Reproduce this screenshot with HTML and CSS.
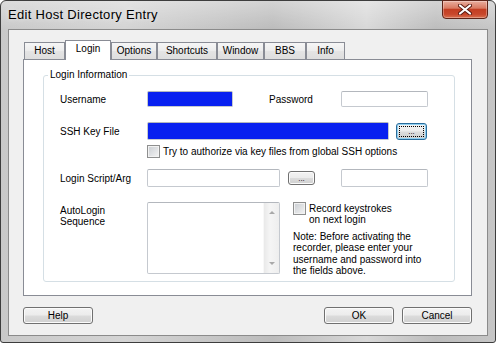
FILE: index.html
```html
<!DOCTYPE html>
<html lang="en">
<head>
    <meta charset="UTF-8">
    <title>Edit Host Directory Entry</title>
    <link rel="stylesheet" href="styles.css">
</head>
<body>
    <div class="window">
        <div class="titlebar">
            <span class="title">Edit Host Directory Entry</span>
            <div class="close">
                <svg width="14" height="11" viewBox="0 0 14 11">
                    <path d="M2 1.5 L12 9.5 M12 1.5 L2 9.5" stroke="#5a1a10" stroke-width="4" stroke-linecap="round"/>
                    <path d="M2 1.5 L12 9.5 M12 1.5 L2 9.5" stroke="#fff" stroke-width="2.2" stroke-linecap="round"/>
                </svg>
            </div>
        </div>

        <div class="client">
            <!-- tab strip -->
            <div class="tabs">
                <div class="tab t-host">Host</div>
                <div class="tab active t-login">Login</div>
                <div class="tab t-options">Options</div>
                <div class="tab t-shortcuts">Shortcuts</div>
                <div class="tab t-window">Window</div>
                <div class="tab t-bbs">BBS</div>
                <div class="tab t-info">Info</div>
            </div>

            <div class="panel">
                <div class="group">
                    <div class="group-title">Login Information</div>

                    <div class="row r-user">
                        <span class="label">Username</span>
                        <div class="field blue f-user"></div>
                        <span class="pw-label">Password</span>
                        <div class="field f-small"></div>
                    </div>

                    <div class="row r-key">
                        <span class="label">SSH Key File</span>
                        <div class="field blue f-key"></div>
                        <div class="btn browse focus"><span class="focus-rect">...</span></div>
                    </div>

                    <div class="row r-check">
                        <span class="check"></span>
                        <span class="check-text">Try to authorize via key files from global SSH options</span>
                    </div>

                    <div class="row r-script">
                        <span class="label">Login Script/Arg</span>
                        <div class="field f-script"></div>
                        <div class="btn browse small">...</div>
                        <div class="field f-small f-arg"></div>
                    </div>

                    <div class="row r-auto">
                        <span class="label two-line">AutoLogin<br>Sequence</span>
                        <div class="field memo">
                            <div class="memo-text"></div>
                            <div class="scroll">
                                <span class="arrow-up"></span>
                                <span class="arrow-down"></span>
                            </div>
                        </div>
                        <div class="record">
                            <div class="record-line">
                                <span class="check"></span>
                                <span class="record-text">Record keystrokes<br>on next login</span>
                            </div>
                            <p class="note">Note: Before activating the<br>recorder, please enter your<br>username and password into<br>the fields above.</p>
                        </div>
                    </div>
                </div>
            </div>

            <div class="buttons">
                <div class="btn">Help</div>
                <div class="spacer"></div>
                <div class="btn">OK</div>
                <div class="btn">Cancel</div>
            </div>
        </div>
    </div>
</body>
</html>
```

FILE: styles.css
```css
body {
    margin: 0;
    background: #fff;
    font-family: "Liberation Sans", Arial, sans-serif;
    font-size: 10px;
    color: #000;
}
.window {
    width: 496px;
    height: 343px;
    box-sizing: border-box;
    border: 1px solid #3d3d3d;
    border-radius: 6px 6px 3px 3px;
    padding: 0 7px 6px 7px;
    display: flex;
    flex-direction: column;
    background:
        linear-gradient(180deg, rgba(255,255,255,0.35), rgba(255,255,255,0) 28px),
        linear-gradient(90deg, #c9c9c9 0%, #d4d4d4 25%, #bcbcbc 55%, #d8d8d8 74%, #bdbdbd 88%, #c6c6c6 100%);
}
.titlebar {
    height: 28px;
    display: flex;
    justify-content: space-between;
    align-items: flex-start;
}
.title {
    font-size: 13px;
    line-height: 28px;
    letter-spacing: 0.3px;
    text-shadow: 0 0 5px rgba(255,255,255,0.7);
}
.close {
    width: 46px;
    height: 19px;
    margin-top: -1px;
    box-sizing: border-box;
    border: 1px solid #5e2418;
    border-radius: 0 0 4px 4px;
    background: linear-gradient(#e9ae9e, #d97a62 42%, #c33e22 50%, #c8472b 78%, #d9704f);
    display: flex;
    align-items: center;
    justify-content: center;
    box-shadow: inset 0 0 0 1px rgba(255,255,255,0.3);
}
.client {
    flex: 1;
    background: #f0f0f0;
    border: 1px solid #8b8b8b;
    padding: 10px 15px 11px 14px;
    display: flex;
    flex-direction: column;
}

/* tabs */
.tabs {
    display: flex;
    align-items: flex-end;
    height: 20px;
    margin-bottom: -1px;
    padding-left: 1px;
    position: relative;
    z-index: 1;
}
.tab {
    height: 17px;
    margin-bottom: 1px;
    box-sizing: border-box;
    border: 1px solid #898c95;
    border-bottom: none;
    background: linear-gradient(#f6f6f6, #ececec 50%, #e4e4e4 51%, #dedede);
    text-align: center;
    line-height: 15px;
}
.tab.active {
    height: 20px;
    margin-bottom: 0;
    background: #fff;
    line-height: 15px;
    padding-bottom: 3px;
}
.t-host { width: 41px; }
.t-login { width: 46px; }
.t-options { width: 46px; }
.t-shortcuts { width: 60px; }
.t-window { width: 47px; }
.t-bbs { width: 42px; }
.t-info { width: 39px; }

.panel {
    height: 237px;
    box-sizing: border-box;
    border: 1px solid #898c95;
    background: #fff;
    padding: 15px 16px 13px 19px;
}
.group {
    height: 207px;
    box-sizing: border-box;
    border: 1px solid #d5dfe5;
    border-radius: 3px;
    padding-left: 16px;
}
.group-title {
    width: max-content;
    height: 12px;
    margin: -7px 0 0 -12px;
    padding: 0 2px;
    line-height: 12px;
    background: #fff;
}

.row {
    display: flex;
    align-items: center;
}
.label {
    width: 87px;
    flex-shrink: 0;
}
.field {
    height: 16px;
    box-sizing: border-box;
    border: 1px solid #c5c9cf;
    border-top-color: #b3b7bd;
    border-radius: 2px;
    background: #fff;
    flex-shrink: 0;
}
.field.blue {
    background: #0820f0;
}
.r-user { margin-top: 10px; }
.f-user { width: 86px; }
.pw-label {
    margin-left: 36px;
    width: 72px;
}
.f-small { width: 87px; }

.r-key { margin-top: 15px; }
.f-key {
    width: 242px;
    height: 18px;
}

.r-check {
    margin-top: 5px;
    padding-left: 87px;
}
.check {
    width: 13px;
    height: 13px;
    box-sizing: border-box;
    border: 1px solid #8e8f8f;
    background: linear-gradient(135deg, #c9cdd2, #f4f4f4);
    box-shadow: inset 0 0 0 1px #f2f2f2;
    flex-shrink: 0;
}
.check-text {
    margin-left: 3px;
}

.r-script { margin-top: 11px; }
.f-script {
    width: 133px;
    height: 18px;
}
.f-arg {
    height: 18px;
    margin-left: 26px;
}

.r-auto {
    margin-top: 15px;
    align-items: flex-start;
}
.two-line {
    line-height: 11px;
    margin-top: 3px;
}
.memo {
    width: 133px;
    height: 72px;
    display: flex;
}
.memo-text { flex: 1; }
.scroll {
    width: 16px;
    background: linear-gradient(90deg, #e9e9e9, #f5f5f5 40%, #eeeeee);
    border-left: 1px solid #f8f8f8;
    display: flex;
    flex-direction: column;
    justify-content: space-between;
    align-items: center;
    padding: 8px 0 8px 0;
    box-sizing: border-box;
}
.arrow-up {
    width: 0;
    height: 0;
    border-left: 3px solid transparent;
    border-right: 3px solid transparent;
    border-bottom: 3px solid #a9a9a9;
}
.arrow-down {
    width: 0;
    height: 0;
    border-left: 3px solid transparent;
    border-right: 3px solid transparent;
    border-top: 3px solid #a9a9a9;
}
.record {
    margin-left: 13px;
}
.record-line {
    display: flex;
    align-items: flex-start;
}
.record-text {
    margin-left: 3px;
    line-height: 11px;
    margin-top: 1px;
}
.note {
    margin: 6px 0 0 0;
    line-height: 11.4px;
    white-space: nowrap;
}

/* buttons */
.btn {
    width: 70px;
    height: 17px;
    box-sizing: border-box;
    border: 1px solid #707070;
    border-radius: 3px;
    background: linear-gradient(#f3f3f3, #ececec 48%, #dcdcdc 52%, #d0d0d0);
    box-shadow: inset 0 0 0 1px #fbfbfb;
    display: flex;
    align-items: center;
    justify-content: center;
    flex-shrink: 0;
}
.browse {
    width: 31px;
    margin-left: 7px;
    font-size: 8px;
}
.browse.small {
    width: 27px;
    height: 14px;
    margin-left: 8px;
}
.focus {
    border-color: #2b6d9c;
    box-shadow: inset 0 0 0 1px #8fd0f2;
    padding: 2px;
}
.focus-rect {
    flex: 1;
    align-self: stretch;
    border: 1px dotted #000;
    display: flex;
    align-items: center;
    justify-content: center;
}
.buttons {
    display: flex;
    gap: 8px;
    margin-top: 11px;
}
.spacer { flex: 1; }
```
